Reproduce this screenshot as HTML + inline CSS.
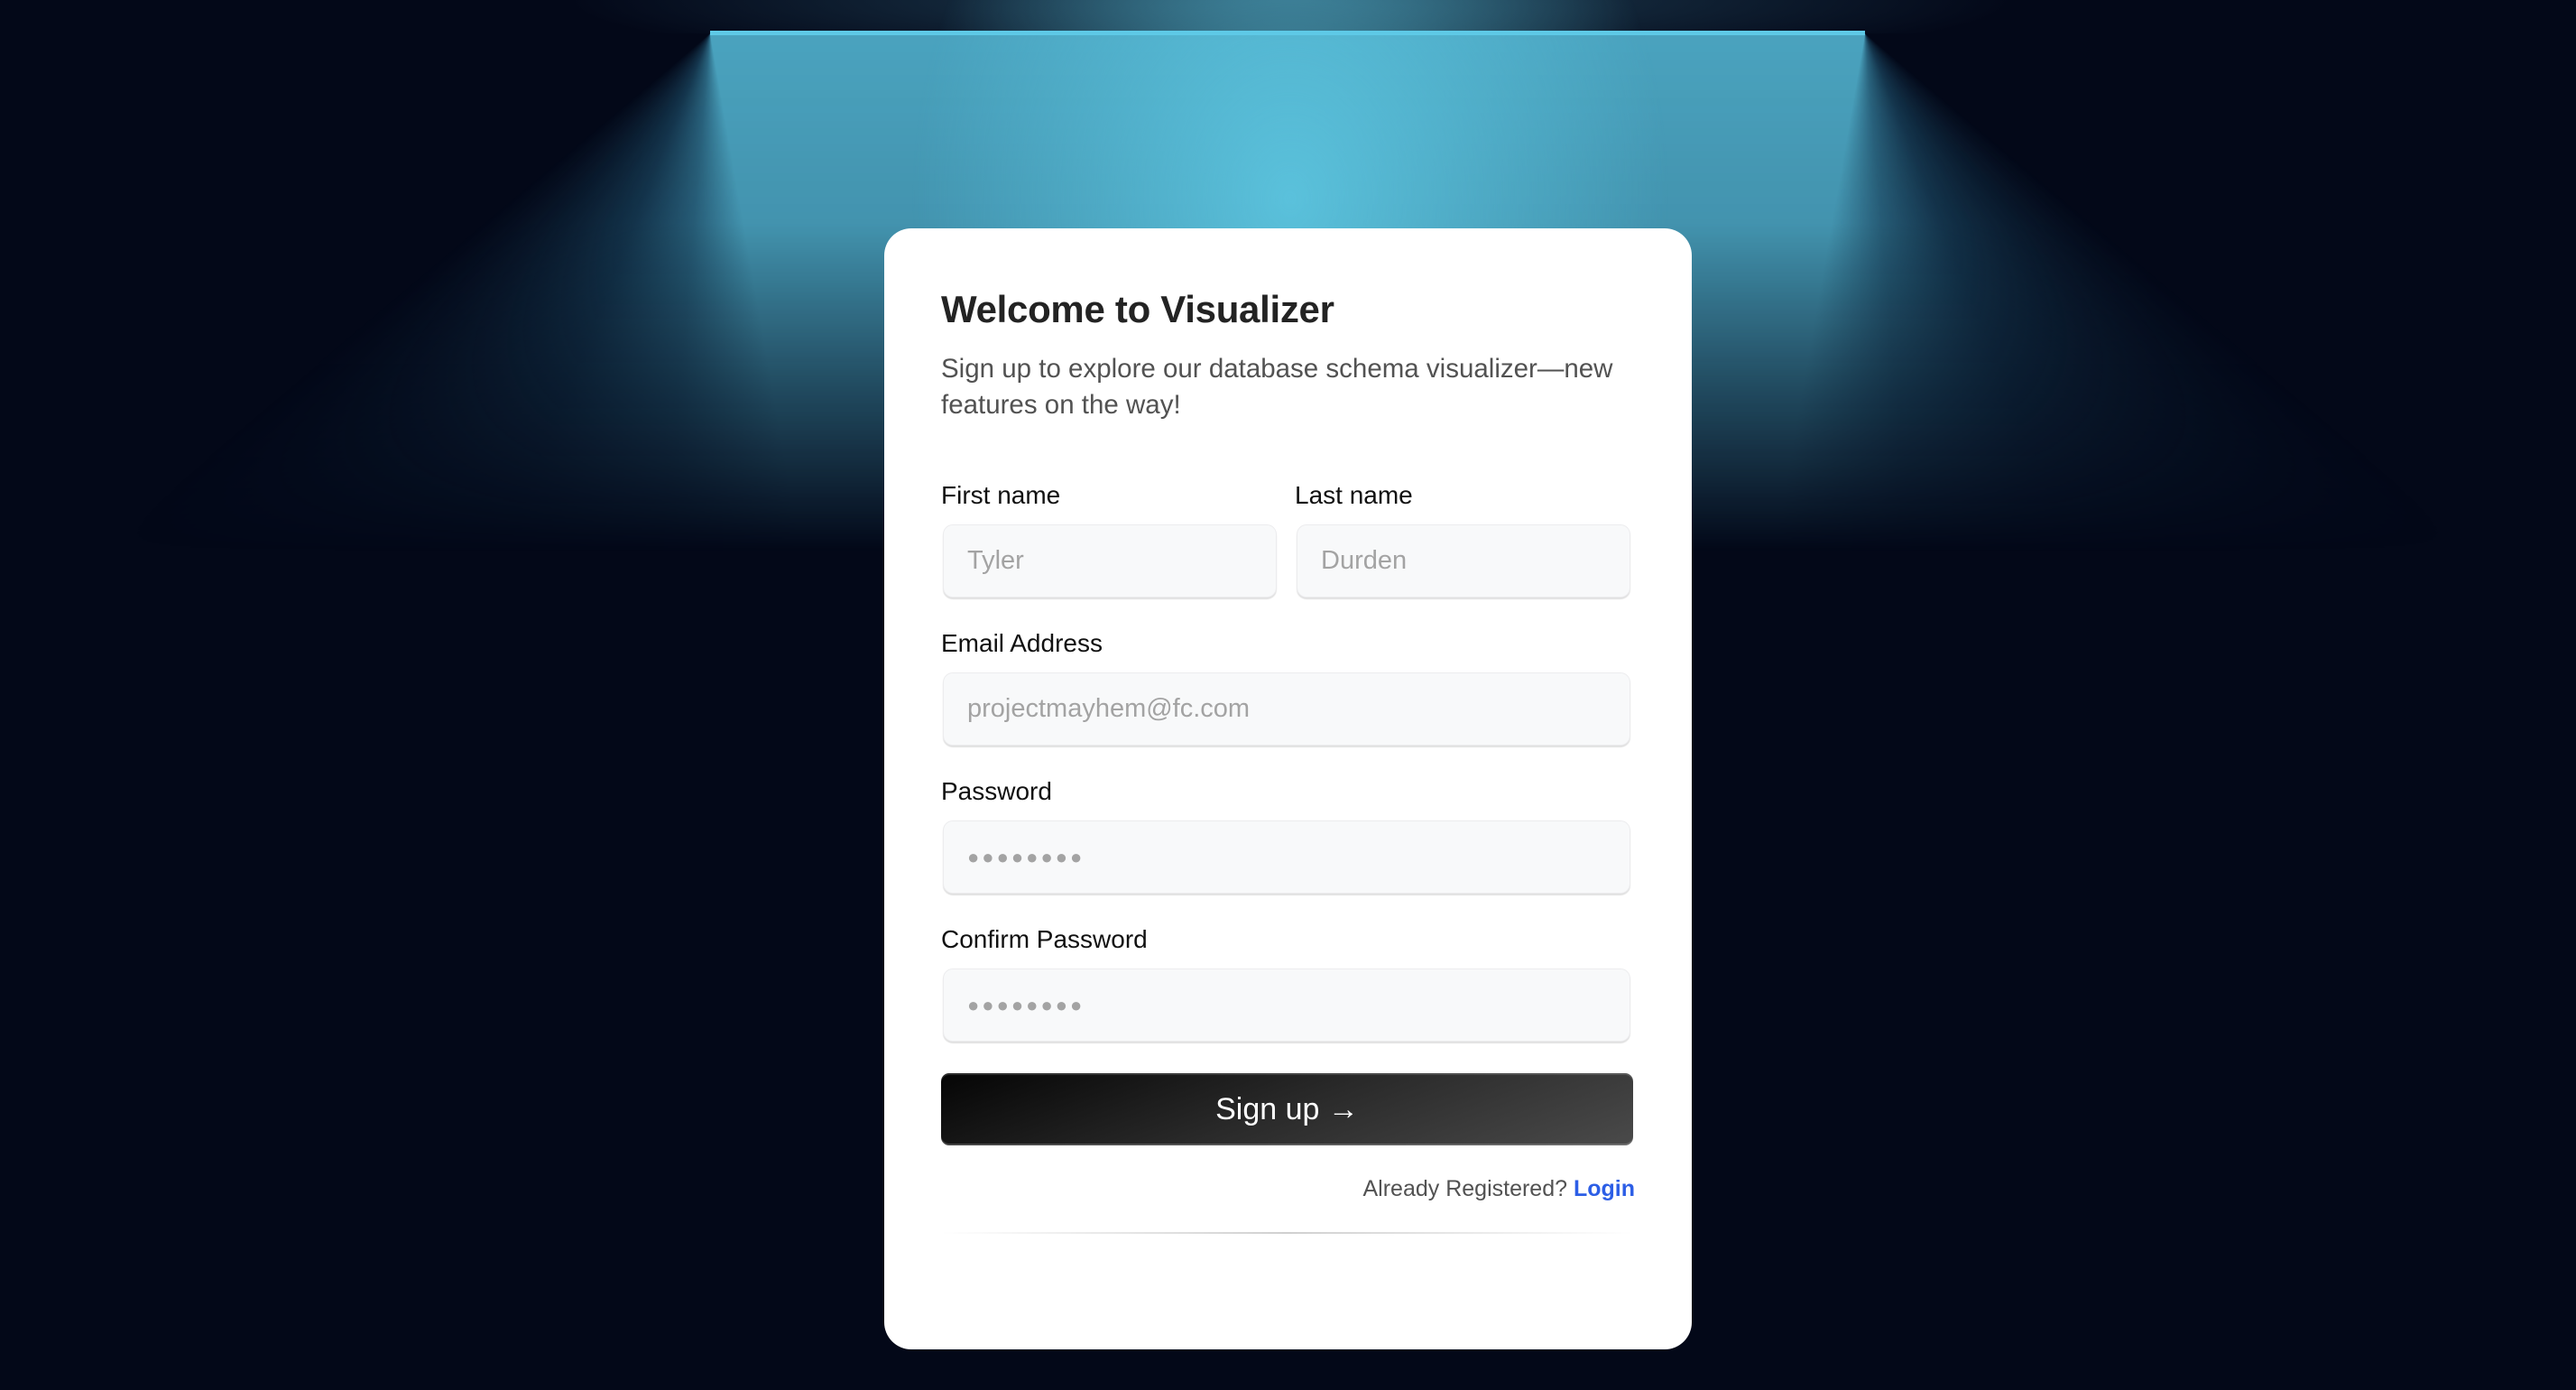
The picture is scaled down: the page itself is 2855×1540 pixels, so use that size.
<!DOCTYPE html>
<html><head><meta charset="utf-8"><style>
*{box-sizing:border-box;margin:0;padding:0}
html,body{width:2855px;height:1540px;overflow:hidden;background:#030818;font-family:"Liberation Sans",sans-serif}
.top{position:absolute;left:0;top:0;width:2855px;height:37px;background:radial-gradient(ellipse 800px 80px at 1430px 0,#1f3f54,rgba(3,8,24,0))}
.cone{position:absolute;top:37px;height:700px;-webkit-mask:linear-gradient(to bottom,#000 0,rgba(0,0,0,.9) 30%,rgba(0,0,0,.45) 55%,transparent 82%);mask:linear-gradient(to bottom,#000 0,rgba(0,0,0,.9) 30%,rgba(0,0,0,.45) 55%,transparent 82%)}
.cl{left:0;width:1430px;background:conic-gradient(from 90deg at 787px 0,#4aa3bf 0deg,#4aa3bf 80deg,#2a6580 95deg,#153850 112deg,rgba(3,8,24,0) 140deg,rgba(3,8,24,0) 360deg)}
.cr{left:1430px;width:1425px;background:conic-gradient(from 130deg at 637px 0,rgba(3,8,24,0) 0deg,#153850 28deg,#2a6580 45deg,#4aa3bf 60deg,#4aa3bf 140deg,rgba(3,8,24,0) 140.1deg)}
.glow{position:absolute;left:730px;top:0;width:1400px;height:900px;background:radial-gradient(ellipse 420px 520px at 700px 220px,rgba(96,204,230,.8),rgba(96,204,230,.35) 55%,rgba(96,204,230,0) 100%);-webkit-mask:linear-gradient(to bottom,#000 40%,transparent 75%);mask:linear-gradient(to bottom,#000 40%,transparent 75%)}
.line{position:absolute;left:787px;top:34px;width:1280px;height:5px;background:#5ec9e6}
.card{position:absolute;left:980px;top:253px;width:895px;height:1242px;background:#fff;border-radius:30px;padding:0 63px}
h1{position:absolute;left:63px;top:66px;font-size:42px;font-weight:bold;color:#232323;letter-spacing:-.3px}
.sub{position:absolute;left:63px;top:136px;width:790px;font-size:29.5px;line-height:40px;color:#525252}
.lab{position:absolute;font-size:28px;color:#111}
.inp{position:absolute;height:81px;background:#f8f9fa;border:1px solid #ececee;border-radius:11px;box-shadow:0 2px 1px rgba(0,0,0,.12);font-size:29px;color:#a3a3a3;padding-left:26px;line-height:79px}
.dots{letter-spacing:3px;font-size:22px}
.btn{position:absolute;left:63px;top:936px;width:767px;height:80px;border-radius:9px;background:linear-gradient(160deg,#050505,#2a2a2a 50%,#4a4a4a);box-shadow:inset 0 2px 0 rgba(255,255,255,.15),inset 0 -2px 0 rgba(255,255,255,.2);color:#fff;font-size:34px;text-align:center;line-height:80px}
.reg{position:absolute;right:63px;top:1050px;font-size:25px;color:#525252}
.reg b{color:#2c5ee6}
.div{position:absolute;left:63px;top:1112px;width:767px;height:2px;background:linear-gradient(to right,rgba(200,200,200,0),#d0d0d0 50%,rgba(200,200,200,0))}
</style></head><body>
<div class="top"></div>
<div class="cone cl"></div>
<div class="cone cr"></div>
<div class="glow"></div>
<div class="line"></div>
<div class="card">
<h1>Welcome to Visualizer</h1>
<div class="sub">Sign up to explore our database schema visualizer—new features on the way!</div>
<div class="lab" style="left:63px;top:280px">First name</div>
<div class="lab" style="left:455px;top:280px">Last name</div>
<div class="inp" style="left:65px;top:328px;width:370px">Tyler</div>
<div class="inp" style="left:457px;top:328px;width:370px">Durden</div>
<div class="lab" style="left:63px;top:444px">Email Address</div>
<div class="inp" style="left:65px;top:492px;width:762px">projectmayhem@fc.com</div>
<div class="lab" style="left:63px;top:608px">Password</div>
<div class="inp dots" style="left:65px;top:656px;width:762px">●●●●●●●●</div>
<div class="lab" style="left:63px;top:772px">Confirm Password</div>
<div class="inp dots" style="left:65px;top:820px;width:762px">●●●●●●●●</div>
<div class="btn">Sign up →</div>
<div class="reg">Already Registered? <b>Login</b></div>
<div class="div"></div>
</div>
</body></html>
